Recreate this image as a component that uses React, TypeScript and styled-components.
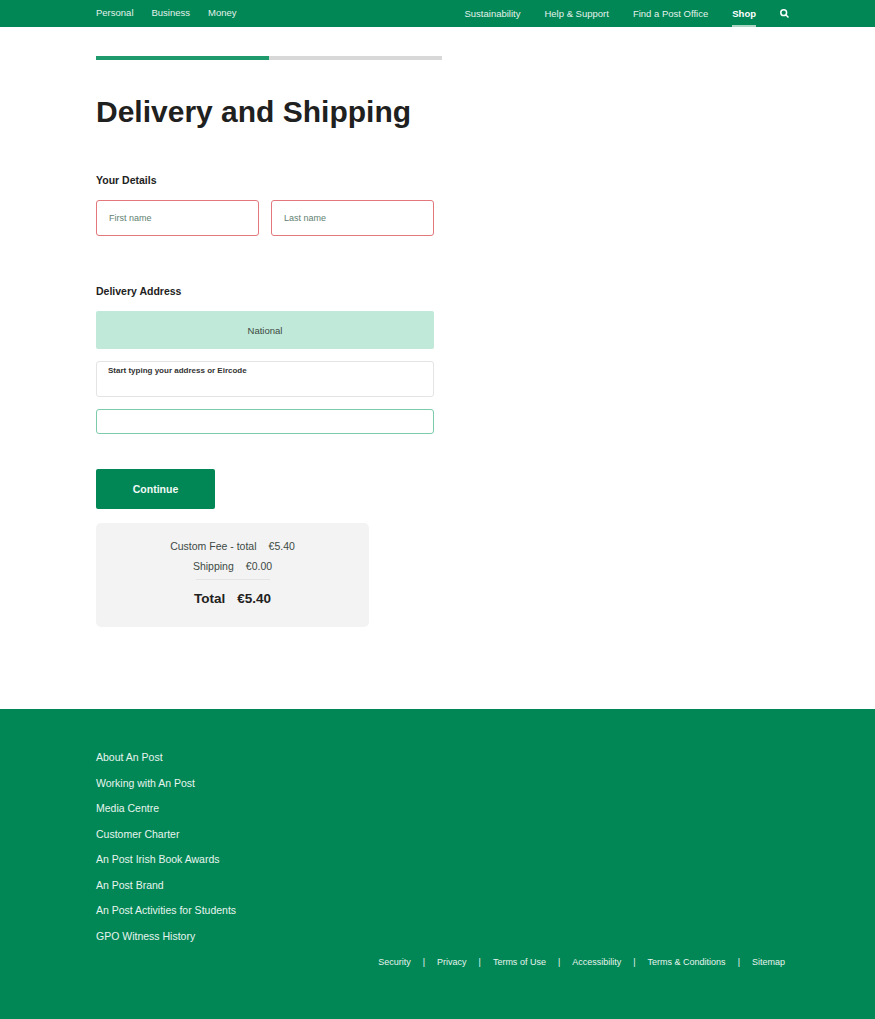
import styled, { createGlobalStyle } from 'styled-components';

const GlobalStyle = createGlobalStyle`
  html, body {
    margin: 0;
    padding: 0;
    background: #fff;
    font-family: "Liberation Sans", Arial, sans-serif;
    color: #1d1d1b;
  }
`;

const Page = styled.div`
  width: 875px;
  height: 1019px;
  display: flex;
  flex-direction: column;
  overflow: hidden;
`;

const TopBar = styled.header`
  height: 27px;
  flex: none;
  box-sizing: border-box;
  padding: 0 86px 0 96px;
  background: #008755;
  display: flex;
  justify-content: space-between;
  color: #e4f2ec;
`;

const NavGroup = styled.nav<{ $gap: number }>`
  display: flex;
  gap: ${(p) => p.$gap}px;
`;

const NavLink = styled.a<{ $active?: boolean; $top?: number }>`
  height: 27px;
  box-sizing: border-box;
  padding-top: ${(p) => p.$top ?? 7}px;
  font-size: 9.5px;
  line-height: 12px;
  font-weight: ${(p) => (p.$active ? 700 : 400)};
  color: ${(p) => (p.$active ? '#fff' : '#e4f2ec')};
  border-bottom: 2px solid ${(p) => (p.$active ? '#a9d4c1' : 'transparent')};
`;

const SearchIcon = styled.svg`
  display: block;
  width: 9px;
  height: 9px;
  margin-top: 9px;
`;

const Main = styled.main`
  flex: 1;
  box-sizing: border-box;
  padding: 29px 0 0 96px;
`;

const Progress = styled.div`
  width: 346px;
  height: 4px;
  background: #d8d8d8;
`;

const ProgressFill = styled.div`
  width: 50%;
  height: 100%;
  background: #1f9a6c;
`;

const Title = styled.h1`
  margin: 34px 0 0;
  font-size: 30px;
  line-height: 36px;
  font-weight: 700;
  color: #1f2120;
`;

const SectionHeading = styled.h2<{ $top: number }>`
  margin: ${(p) => p.$top}px 0 0;
  font-size: 10.5px;
  line-height: 14px;
  font-weight: 700;
  color: #222;
`;

const NameRow = styled.div`
  margin-top: 13px;
  width: 338px;
  display: grid;
  grid-template-columns: 1fr 1fr;
  gap: 12px;
`;

const NameField = styled.div`
  height: 36px;
  box-sizing: border-box;
  padding-left: 12px;
  display: flex;
  align-items: center;
  border: 1px solid #e2777c;
  border-radius: 3px;
  font-size: 9px;
  color: #5f7f72;
`;

const RegionTab = styled.div`
  margin-top: 13px;
  width: 338px;
  height: 38px;
  display: flex;
  align-items: center;
  justify-content: center;
  background: #c1e9d9;
  border-radius: 2px;
  font-size: 9.5px;
  color: #3c4a44;
`;

const AddressBox = styled.div`
  margin-top: 12px;
  width: 338px;
  height: 36px;
  box-sizing: border-box;
  padding: 3px 0 0 11px;
  border: 1px solid #e4e4e4;
  border-radius: 3px;
  font-size: 8px;
  line-height: 11px;
  font-weight: 700;
  color: #333;
`;

const AddressInput = styled.div`
  margin-top: 12px;
  width: 338px;
  height: 25px;
  box-sizing: border-box;
  border: 1px solid #7ccbaa;
  border-radius: 3px;
`;

const ContinueButton = styled.button`
  display: block;
  margin-top: 35px;
  width: 119px;
  height: 40px;
  padding: 0;
  border: 0;
  border-radius: 2px;
  background: #008755;
  color: #f3f9f6;
  font-family: inherit;
  font-size: 10.5px;
  font-weight: 700;
`;

const Summary = styled.section`
  margin-top: 14px;
  width: 273px;
  height: 104px;
  box-sizing: border-box;
  padding-top: 16px;
  background: #f3f3f3;
  border-radius: 5px;
  display: flex;
  flex-direction: column;
  align-items: center;
`;

const SummaryRow = styled.div<{ $total?: boolean }>`
  display: flex;
  gap: ${(p) => (p.$total ? 12 : 12)}px;
  height: ${(p) => (p.$total ? 22 : 14)}px;
  margin-bottom: ${(p) => (p.$total ? 0 : 5.5)}px;
  font-size: ${(p) => (p.$total ? 13.5 : 10.5)}px;
  line-height: ${(p) => (p.$total ? 22 : 14)}px;
  font-weight: ${(p) => (p.$total ? 700 : 400)};
  color: ${(p) => (p.$total ? '#1f2120' : '#3d4a45')};
`;

const SummaryRule = styled.hr`
  width: 74px;
  height: 1px;
  margin: 1px 0 8px;
  border: 0;
  background: #e4e4e4;
`;

const Footer = styled.footer`
  flex: none;
  height: 310px;
  box-sizing: border-box;
  padding: 41px 90px 0 96px;
  background: #008755;
  color: #e8f4ef;
`;

const FooterList = styled.ul`
  margin: 0;
  padding: 0;
  list-style: none;
  display: flex;
  flex-direction: column;
  gap: 11.5px;
  font-size: 10.5px;
  line-height: 14px;
`;

const LegalRow = styled.div`
  margin-top: 13px;
  display: flex;
  justify-content: flex-end;
  gap: 12px;
  font-size: 9px;
  line-height: 12px;
`;

const footerLinks = [
  'About An Post',
  'Working with An Post',
  'Media Centre',
  'Customer Charter',
  'An Post Irish Book Awards',
  'An Post Brand',
  'An Post Activities for Students',
  'GPO Witness History',
];

const legalLinks = ['Security', 'Privacy', 'Terms of Use', 'Accessibility', 'Terms & Conditions', 'Sitemap'];

export default function App() {
  return (
    <Page>
      <GlobalStyle />
      <TopBar>
        <NavGroup $gap={18}>
          <NavLink $top={7}>Personal</NavLink>
          <NavLink $top={7}>Business</NavLink>
          <NavLink $top={7}>Money</NavLink>
        </NavGroup>
        <NavGroup $gap={24}>
          <NavLink $top={8}>Sustainability</NavLink>
          <NavLink $top={8}>Help &amp; Support</NavLink>
          <NavLink $top={8}>Find a Post Office</NavLink>
          <NavLink $top={8} $active>
            Shop
          </NavLink>
          <SearchIcon viewBox="0 0 9 9" fill="none" stroke="#fff" strokeWidth="1.5">
            <circle cx="3.7" cy="3.7" r="2.9" />
            <path d="M5.8 5.8 8.5 8.5" />
          </SearchIcon>
        </NavGroup>
      </TopBar>
      <Main>
        <Progress>
          <ProgressFill />
        </Progress>
        <Title>Delivery and Shipping</Title>
        <SectionHeading $top={43}>Your Details</SectionHeading>
        <NameRow>
          <NameField>First name</NameField>
          <NameField>Last name</NameField>
        </NameRow>
        <SectionHeading $top={48}>Delivery Address</SectionHeading>
        <RegionTab>National</RegionTab>
        <AddressBox>Start typing your address or Eircode</AddressBox>
        <AddressInput />
        <ContinueButton>Continue</ContinueButton>
        <Summary>
          <SummaryRow>
            <span>Custom Fee - total</span>
            <span>€5.40</span>
          </SummaryRow>
          <SummaryRow>
            <span>Shipping</span>
            <span>€0.00</span>
          </SummaryRow>
          <SummaryRule />
          <SummaryRow $total>
            <span>Total</span>
            <span>€5.40</span>
          </SummaryRow>
        </Summary>
      </Main>
      <Footer>
        <FooterList>
          {footerLinks.map((link) => (
            <li key={link}>{link}</li>
          ))}
        </FooterList>
        <LegalRow>
          {legalLinks.map((link, i) => (
            <>
              {i > 0 && <span>|</span>}
              <span>{link}</span>
            </>
          ))}
        </LegalRow>
      </Footer>
    </Page>
  );
}
